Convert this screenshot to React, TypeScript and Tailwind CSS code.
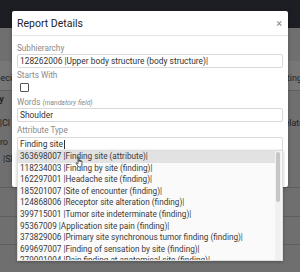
import React from 'react';

const options = [
  '363698007 |Finding site (attribute)|',
  '118234003 |Finding by site (finding)|',
  '162297001 |Headache site (finding)|',
  '185201007 |Site of encounter (finding)|',
  '124868006 |Receptor site alteration (finding)|',
  '399715001 |Tumor site indeterminate (finding)|',
  '95367009 |Application site pain (finding)|',
  '373829006 |Primary site synchronous tumor finding (finding)|',
  '699697007 |Finding of sensation by site (finding)|',
  '279001004 |Pain finding at anatomical site (finding)|',
];

const HandCursor: React.FC = () => (
  <svg width="10" height="12" viewBox="0 0 10 12" className="absolute left-[57px] top-[5px]">
    <path
      d="M3 1.2c0-.6.9-.6.9 0V5.5l.1-1c0-.6.9-.6.9 0v1l.1-.7c0-.6.9-.6.9 0v1l.1-.5c0-.6.9-.6.9 0V8.5c0 1.4-.9 2.5-2.3 2.5H4.6C3.7 11 3.2 10.5 2.7 9.8L1.2 7.5c-.4-.6.3-1.1.8-.6l1 1V1.2z"
      fill="#fff"
      stroke="#222"
      strokeWidth="0.7"
    />
  </svg>
);

const Label: React.FC<{ children: React.ReactNode; className?: string }> = ({ children, className }) => (
  <div className={`h-[11px] leading-[11px] text-[8.2px] text-[#8a8a8a] ${className ?? ''}`}>{children}</div>
);

const Field: React.FC<{ value: string; caret?: boolean; className?: string }> = ({ value, caret, className }) => (
  <div
    className={`h-[14px] border border-[#d9d9d9] rounded-[2px] px-[2px] flex items-center text-[8.4px] text-[#333] ${className ?? ''}`}
  >
    <span>{value}</span>
    {caret && <span className="w-px h-[9px] bg-[#333] ml-px" />}
  </div>
);

export default function App() {
  return (
    <div className="relative w-[300px] h-[272px] overflow-hidden bg-[#6f6f6f] font-['Roboto',sans-serif]">
      {/* page behind the backdrop */}
      <div className="h-[28px] bg-[#1c1e23]" />
      <div className="h-[33px]" />
      <div className="h-[30px] bg-[#777] border-b border-[#5f5f5f] flex items-end justify-between pb-[5px] text-[9px] text-[#232323]">
        <span className="-ml-[10px]">Specific</span>
        <span className="mr-[-2px]">Setting</span>
      </div>
      <div className="h-[97px] flex flex-col text-[9px] text-[#232323] border-b border-[#5f5f5f]">
        <div className="h-[18px] flex items-center font-bold">
          <span className="-ml-[38px]">Taxonomy</span>
        </div>
        <div className="h-[6px]" />
        <div className="h-[18px] flex items-center justify-between">
          <span className="-ml-[48px]">123037004 |Cl</span>
          <span className="mr-[-4px]">relate</span>
        </div>
        <div className="h-[20px] flex items-center">
          <span className="-ml-[8px]">|Pro</span>
        </div>
        <div className="h-[14px] flex items-center">
          <span className="ml-[3px]">|SN</span>
        </div>
      </div>
      <div className="h-[29px] border-b border-[#5f5f5f]" />
      <div className="h-[28px] border-b border-[#5f5f5f]" />
      <div className="h-[28px] border-b border-[#5f5f5f]" />

      {/* modal */}
      <div className="absolute left-[12px] top-[11px] w-[276px] h-[176px] bg-white rounded-[2px] shadow-[0_1px_4px_rgba(0,0,0,0.25)]">
        <div className="h-[25px] border-b border-[#e6e6e6] flex items-center justify-between pl-[5px] pr-[6px]">
          <span className="text-[10.5px] text-[#222] pt-[1px]">Report Details</span>
          <span className="text-[11px] leading-none text-[#888]">×</span>
        </div>
        <div className="relative px-[5px] pt-[7px]">
          <Label>Subhierarchy</Label>
          <Field value="128262006 |Upper body structure (body structure)|" />
          <Label className="mt-[2px]">Starts With</Label>
          <div className="mt-[2px] ml-[3px] w-[9px] h-[9px] border border-[#555] rounded-[1px] bg-white" />
          <Label className="mt-[5px]">
            Words <span className="italic text-[6.8px]">(mandatory field)</span>
          </Label>
          <Field value="Shoulder" />
          <Label className="mt-[3px]">Attribute Type</Label>
          <Field value="Finding site" caret className="mt-px" />

          {/* dropdown */}
          <div className="absolute left-[5px] top-[114px] w-[266px] h-[111px] bg-[#fafafa] border border-[#dedede] shadow-[0_1px_3px_rgba(0,0,0,0.25)] overflow-hidden flex">
            <div className="relative flex-1 flex flex-col">
              {options.map((o, i) => (
                <div
                  key={o}
                  className={`h-[11.6px] shrink-0 leading-[11.6px] px-[2px] text-[8.2px] text-[#3a3a3a] whitespace-nowrap ${
                    i === 0 ? 'bg-[#e2e2e2]' : ''
                  }`}
                >
                  {o}
                </div>
              ))}
              <HandCursor />
            </div>
            <div className="w-[6px] bg-[#f1f1f1] pt-[1px] px-[1px] mr-[1px]">
              <div className="h-[50px] rounded-[2px] bg-[#c6c6c6]" />
            </div>
          </div>
        </div>
      </div>
    </div>
  );
}
